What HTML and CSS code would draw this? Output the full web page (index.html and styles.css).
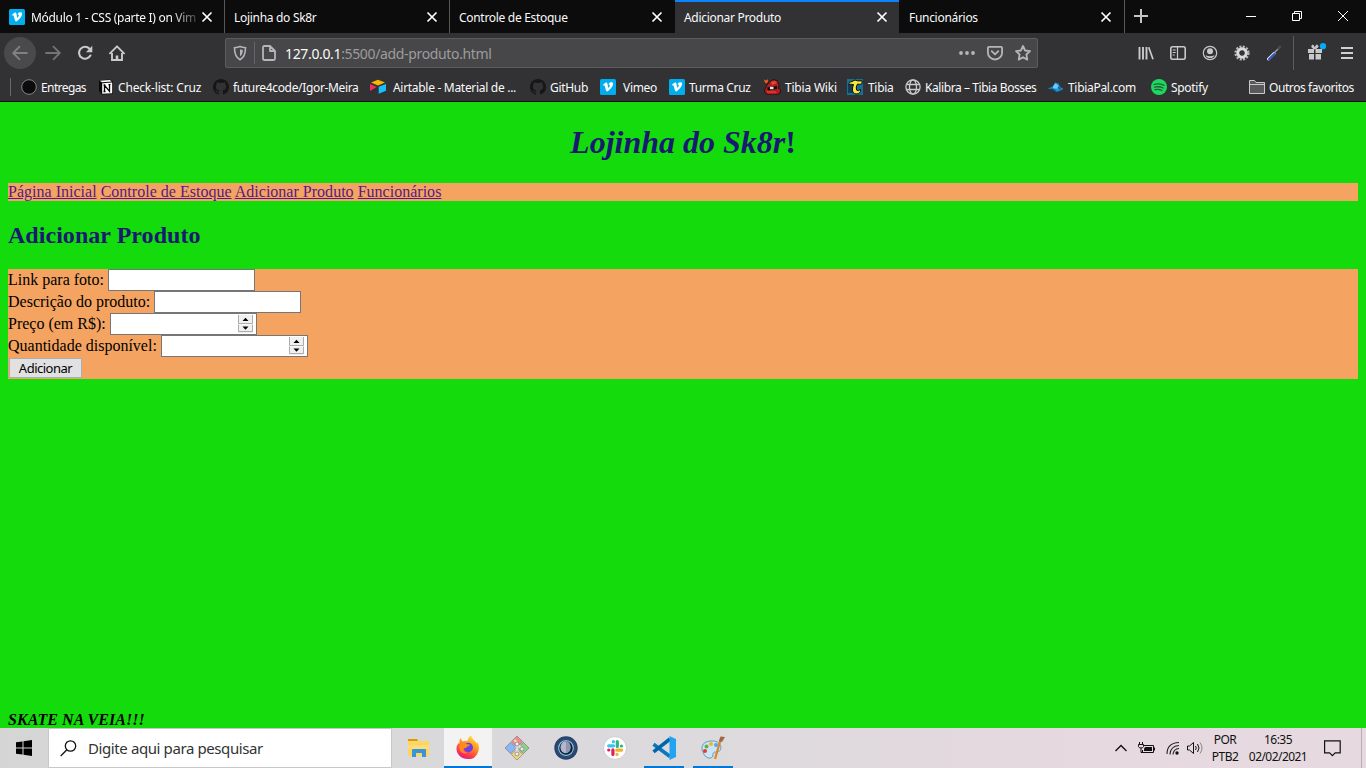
FILE: index.html
```html
<!DOCTYPE html>
<html lang="pt-BR">
<head>
<meta charset="utf-8">
<title>Adicionar Produto</title>
<link rel="stylesheet" href="styles.css">
</head>
<body>
<svg class="defs" width="0" height="0">
  <symbol id="close" viewBox="0 0 12 12"><path d="M1.5 1.5l9 9M10.5 1.5l-9 9" stroke="#fff" stroke-width="1.7" fill="none"/></symbol>
  <symbol id="vimeo" viewBox="0 0 16 16"><rect width="16" height="16" rx="1.5" fill="#00adef"/><path d="M2.8 5.9l.5.6c.8-.5 1.1-.4 1.4.5l1 3.6c.5 1.8 1.3 2.2 2.4 1.5 2.3-1.5 4.8-4.6 5-7C13.200 3.500 12.300 3 11 3.200 9.700 3.400 8.800 4.300 8.500 5.600c1.500-.5 1.700.5.8 2.100-.7 1.300-1 1.300-1.300.1L7.400 4.800C7.100 3.500 6.500 3.200 5.500 3.700 4.600 4.200 3.700 5.100 2.800 5.900z" fill="#fff"/></symbol>
  <symbol id="github" viewBox="0 0 16 16"><path fill="#161616" d="M8 0C3.580 0 0 3.580 0 8c0 3.540 2.290 6.530 5.470 7.590.4.070.55-.17.55-.38v-1.490c-2.230.48-2.700-1.070-2.700-1.070-.36-.92-.89-1.170-.89-1.170-.73-.5.050-.49.050-.49.810.060 1.230.83 1.230.83.72 1.230 1.880.87 2.340.66.070-.52.280-.87.510-1.070-1.780-.2-3.640-.89-3.640-3.950 0-.87.310-1.590.820-2.150-.080-.2-.360-1.020.080-2.120 0 0 .67-.21 2.200.82a7.600 7.600 0 0 1 4 0c1.530-1.040 2.200-.82 2.200-.82.440 1.100.160 1.920.080 2.120.510.560.820 1.270.820 2.150 0 3.070-1.870 3.750-3.650 3.950.290.250.540.730.540 1.480v2.200c0 .21.150.46.550.38A8 8 0 0 0 16 8c0-4.420-3.580-8-8-8z"/></symbol>
</svg>

<header class="browser">
  <div class="tabstrip">
    <div class="tab tab-icon"><svg class="favicon" width="16" height="16"><use href="#vimeo"/></svg><span class="tab-title fade">Módulo 1 - CSS (parte I) on Vim</span><svg class="close" width="12" height="12"><use href="#close"/></svg></div>
    <div class="tab"><span class="tab-title">Lojinha do Sk8r</span><svg class="close" width="12" height="12"><use href="#close"/></svg></div>
    <div class="tab before-active"><span class="tab-title">Controle de Estoque</span><svg class="close" width="12" height="12"><use href="#close"/></svg></div>
    <div class="tab active"><span class="tab-title">Adicionar Produto</span><svg class="close" width="12" height="12"><use href="#close"/></svg></div>
    <div class="tab last"><span class="tab-title">Funcionários</span><svg class="close" width="12" height="12"><use href="#close"/></svg></div>
    <svg class="newtab" width="14" height="14"><path d="M7 0v14M0 7h14" stroke="#c4c4c4" stroke-width="2"/></svg>
    <div class="winbtns">
      <svg width="10" height="10"><path d="M0 5.500h10" stroke="#fff"/></svg>
      <svg width="10" height="10" fill="none" stroke="#fff"><path d="M.5 2.500h7v7h-7zM2.500 2.500v-2h7v7h-2"/></svg>
      <svg width="10" height="10"><path d="M0 0l10 10M10 0L0 10" stroke="#fff"/></svg>
    </div>
  </div>

  <div class="toolbar">
    <div class="back"><svg width="16" height="16" fill="none" stroke="#818183" stroke-width="1.800" stroke-linecap="round" stroke-linejoin="round"><path d="M15 8H1.500M7.500 1.700L1.200 8l6.300 6.300"/></svg></div>
    <svg class="fwd" width="16" height="16" fill="none" stroke="#737375" stroke-width="1.800" stroke-linecap="round" stroke-linejoin="round"><path d="M1 8h13.500M8.500 1.700L14.800 8l-6.300 6.300"/></svg>
    <svg class="reload" width="16" height="16" fill="none" stroke="#c9c9ca" stroke-width="2.100"><path d="M12.500 3.700A6 6 0 1 0 13.400 10.500" stroke-linecap="round"/><path d="M15.300.8v6.400H8.900z" fill="#c9c9ca" stroke="none"/></svg>
    <svg class="home" width="16" height="16" fill="none" stroke="#c9c9ca" stroke-width="1.900"><path d="M1 8.300L8 1.300l7 7" stroke-linecap="round" stroke-linejoin="round"/><path d="M3 8v7h10V8"/><path d="M8 15v-4.500" stroke-width="2.600"/></svg>
    <div class="urlbar">
      <svg class="shield" width="14" height="16" fill="none" stroke="#b6b6b8" stroke-width="1.600"><path d="M7 1.500c2 .9 3.700 1.100 5.500 1.200 0 5.500-1 9.600-5.500 12C2.500 12.300 1.500 8.200 1.500 2.700 3.300 2.600 5 2.400 7 1.500z"/><path d="M7 4.200c1 .4 2 .7 2.900.8-.1 2.700-.8 5.100-2.900 6.600z" fill="#b6b6b8" stroke="none"/></svg>
      <i class="urlsep"></i>
      <svg class="doc" width="14" height="16" fill="none" stroke="#b6b6b8" stroke-width="1.800" stroke-linejoin="round"><path d="M2.500 1H8l5 5v7.500q0 1.500-1.500 1.500h-9Q1 15 1 13.500v-11Q1 1 2.500 1zM8 1v5h5"/></svg>
      <span class="url"><b>127.0.0.1</b>:5500/add-produto.html</span>
      <svg class="dots" width="16" height="16" fill="#b6b6b8"><circle cx="2" cy="8" r="1.900"/><circle cx="8" cy="8" r="1.900"/><circle cx="14" cy="8" r="1.900"/></svg>
      <svg class="pocket" width="16" height="16" fill="none" stroke="#b6b6b8" stroke-width="1.800" stroke-linecap="round" stroke-linejoin="round"><path d="M2 1.900h12q1.100 0 1.100 1.100v4.500a7.100 7 0 0 1-14.200 0V3Q.9 1.900 2 1.900z"/><path d="M4.700 6.200L8 9.300l3.300-3.100"/></svg>
      <svg class="star" width="16" height="16" fill="none" stroke="#b6b6b8" stroke-width="1.800" stroke-linejoin="round"><path d="M8 1l2.100 4.500 4.900.6-3.600 3.400.9 5.100L8 12.200l-4.300 2.400.9-5.100L1 6.100l4.900-.6z"/></svg>
    </div>
    <div class="tools">
      <svg width="16" height="16" fill="none" stroke="#c9c9ca" stroke-width="1.900"><path d="M1.500 2v12.500M5 2v12.500M8.500 2v12.500"/><path d="M10.700 2.300l4.300 12" stroke-width="1.700"/></svg>
      <svg width="16" height="16" fill="none" stroke="#c9c9ca" stroke-width="1.600"><rect x=".8" y="1.800" width="14.400" height="12.400" rx="1.700"/><path d="M7.500 2v12M2.700 5h3M2.700 7.500h3M2.700 10h2" stroke-width="1.200"/></svg>
      <svg width="16" height="16" fill="none" stroke="#c9c9ca" stroke-width="1.200"><circle cx="8" cy="8" r="6.700"/><circle cx="8" cy="6.200" r="3" fill="#c9c9ca" stroke="none"/><path d="M3.500 10.200q4.500 2 9 0Q11.500 13 8 13t-4.500-2.800z" fill="#c9c9ca" stroke="none"/></svg>
      <svg width="16" height="16" fill="none"><circle cx="8" cy="8" r="6.400" stroke="#b8b8b8" stroke-width="2.400" stroke-dasharray="2 1.350"/><circle cx="8" cy="8" r="4.200" stroke="#d9d9d9" stroke-width="3"/><circle cx="8" cy="8" r="2.300" fill="#343436"/></svg>
      <svg width="16" height="16" fill="none" stroke-linecap="round"><path d="M2.500 14L8 8.500" stroke="#e9edf5" stroke-width="3"/><path d="M3 14.300L8.300 9" stroke="#3058c0" stroke-width="2.200"/><path d="M8.500 7.500L12 4" stroke="#a5a5aa" stroke-width="1.300"/><path d="M12.500 3.300l1.500-1.500" stroke="#4a4a50" stroke-width="2.600"/></svg>
    </div>
    <i class="toolsep"></i>
    <svg class="gift" width="20" height="18" fill="#c9c9ca"><path d="M1 6h6v4H1zM8.500 6H15v4H8.500zM2 11h5v5.500H2zM8.500 11H14v5.500H8.500z"/><path d="M7.800 6Q3.500 4.500 5 2.600T7.800 6q1.300-5.500 2.900-3.600T7.800 6" stroke="#c9c9ca" stroke-width="1"/><circle cx="16" cy="3.200" r="3.100" fill="#00adff"/></svg>
    <svg class="menu" width="12" height="14"><path d="M0 2h12M0 7h12M0 12h12" stroke="#d0d0d1" stroke-width="2"/></svg>
  </div>

  <div class="bookmarks">
    <i class="bmsep"></i>
    <div class="bm b1"><svg width="16" height="16"><circle cx="8" cy="8" r="7.300" fill="#0b0b0b" stroke="#858587"/></svg><span>Entregas</span></div>
    <div class="bm b2"><svg width="16" height="16"><path d="M1 1.500L12 .5l3 2V15L4 15.500 1 12z" fill="#090909"/><path d="M1.800 1.800L11.800 1l2 1.500-9.800.7z" fill="#fff"/><path d="M4.200 4.200l10-.7v10.700l-10 .6z" fill="#fff"/><path d="M6.500 12.500V6.300l5 6V5.600M5.500 6.200h2M5.500 12.500h2M10.500 5.600h2" fill="none" stroke="#000" stroke-width="1.300"/></svg><span>Check-list: Cruz</span></div>
    <div class="bm b3"><svg width="16" height="16"><use href="#github"/></svg><span>future4code/Igor-Meira</span></div>
    <div class="bm b4 wide"><svg width="16" height="16"><path d="M1 3.500L8 .8l7 2.700-7 2.900z" fill="#fcb400"/><path d="M8.700 7.700L16 4.900v6.800l-7.300 3z" fill="#18bfff"/><path d="M0 5l6.700 2.900L0 12z" fill="#f82b60"/></svg><span>Airtable - Material de ...</span></div>
    <div class="bm b5"><svg width="16" height="16"><use href="#github"/></svg><span>GitHub</span></div>
    <div class="bm b6 wide"><svg width="16" height="16"><use href="#vimeo"/></svg><span>Vimeo</span></div>
    <div class="bm b7"><svg width="16" height="16"><use href="#vimeo"/></svg><span>Turma Cruz</span></div>
    <div class="bm b8"><svg width="17" height="16"><path d="M3 6l3-3.500L9 .5l4 1 2 4-.5 4 2.300 1.500-.8 3L13 15.700H4L.5 13 1 10z" fill="#b01e1e" stroke="#200808" stroke-width=".8"/><path d="M7 3l4-1 2 2-5 2z" fill="#e5443a"/><path d="M3 8.500l10-1.500v3l-9 1.500z" fill="#101010"/><path d="M6 7.800h3.500v2.400H6z" fill="#dfe6e8"/><path d="M3 13h9" stroke="#e0443b" stroke-width="1.300"/><path d="M0 .5l2 1 2-1.300L3.800 3 2 4.500.7 3z" fill="#ff5a16"/></svg><span>Tibia Wiki</span></div>
    <div class="bm b9"><svg width="17" height="16"><path d="M0 0h16v16H0z" fill="#147094"/><path d="M1 6h5v8H1z" fill="#143b57"/><path d="M1.500 5.500Q2 2.500 5 2.500L8 1q2 1.500 7 .8v3q-2 1-4.500.2Q8.500 8 9.500 11q1.700 2 4-.7v2.400Q12 15.300 9 15q-4-.8-3.500-5 0-2 1-4.500-2-.5-5 0z" fill="#fdea37" stroke="#0d0d08"/></svg><span>Tibia</span></div>
    <div class="bm b10"><svg width="16" height="16" fill="none" stroke="#c9c9ca" stroke-width="1.300"><circle cx="8" cy="8" r="7.100"/><ellipse cx="8" cy="8" rx="3.500" ry="7.100"/><path d="M1.500 5.500h13M1.500 10.500h13"/></svg><span>Kalibra – Tibia Bosses</span></div>
    <div class="bm b11"><svg width="16" height="16"><path d="M0 9.500l5-2 2-4 3.500 1L12 8l3.500 2-3 1.500-4 1.500-3.500-2z" fill="#1b91d8"/><path d="M5 7.300l2.500-3 3 2.500-1.500 3-4-.5z" fill="#6ccbf2"/><path d="M2 10l4 .5 2 2M10.500 8l2 2.500" stroke="#0b3f73" fill="none"/></svg><span>TibiaPal.com</span></div>
    <div class="bm b12"><svg width="16" height="16"><circle cx="8" cy="8" r="8" fill="#1ed760"/><path d="M3 5.500q5-1.500 10 .8M3.500 8.200q4.500-1.200 8.600.8M4 10.700q4-.8 7 .8" stroke="#25603b" stroke-width="1.300" stroke-linecap="round" fill="none"/></svg><span>Spotify</span></div>
    <div class="bm b13"><svg width="16" height="16" fill="#59595b" stroke="#c9c9ca"><path d="M.5 14.500v-13h5l1.500 2h8.500v11zM.5 5.500h15"/></svg><span>Outros favoritos</span></div>
  </div>
</header>

<main class="page">
  <h1><em>Lojinha do Sk8r</em>!</h1>
  <nav><a>Página Inicial</a> <a>Controle de Estoque</a> <a>Adicionar Produto</a> <a>Funcionários</a></nav>
  <h2>Adicionar Produto</h2>
  <form class="form">
    <div class="row"><label>Link para foto:</label><span class="field"></span></div>
    <div class="row"><label>Descrição do produto:</label><span class="field"></span></div>
    <div class="row"><label>Preço (em R$):</label><span class="field"><svg class="spin" width="15" height="18"><path d="M0 0h15v8.500H0zM0 9.500h15V18H0z" fill="#f0f0f0"/><path d="M.5 0v8.500h14V0M.5 9.500v7h14v-7" fill="none" stroke="#adadad"/><path d="M4.500 6h6l-3-3.200zM4.500 11.500h6l-3 3.200z"/></svg></span></div>
    <div class="row"><label>Quantidade disponível:</label><span class="field"><svg class="spin" width="15" height="18"><path d="M0 0h15v8.500H0zM0 9.500h15V18H0z" fill="#f0f0f0"/><path d="M.5 0v8.500h14V0M.5 9.500v7h14v-7" fill="none" stroke="#adadad"/><path d="M4.500 6h6l-3-3.200zM4.500 11.500h6l-3 3.200z"/></svg></span></div>
    <div class="row"><button type="button" class="submit">Adicionar</button></div>
  </form>
  <footer>SKATE NA VEIA!!!</footer>
</main>

<div class="taskbar">
  <div class="start"><svg width="16" height="16"><path d="M0 2.300L6.500 1.400v6.100H0zM7.500 1.200L16 0v7.500H7.500zM0 8.500h6.500v6.100L0 13.700zM7.500 8.500H16V16l-8.500-1.200z"/></svg></div>
  <div class="search"><svg width="17" height="17" fill="none" stroke="#111" stroke-width="1.300"><circle cx="10.500" cy="6" r="5.200"/><path d="M6.900 9.800L.7 16"/></svg><span>Digite aqui para pesquisar</span></div>
  <div class="apps">
    <div class="app"><svg width="24" height="24"><path d="M1 3h9l1 2H1z" fill="#d69b0d"/><path d="M1 5h21v15H1z" fill="#ffd45f"/><path d="M1 9h21v4H1z" fill="#ffdc78"/><path d="M5 14q0-1 1-1h12q1 0 1 1v7h-4v-4H9v4H5z" fill="#3595d7"/></svg></div>
    <div class="app current"><svg width="24" height="24"><defs><linearGradient id="fx" x1=".8" y1="0" x2=".3" y2="1"><stop stop-color="#fff044"/><stop offset=".4" stop-color="#ff9922"/><stop offset=".75" stop-color="#ff3d4a"/><stop offset="1" stop-color="#df168c"/></linearGradient></defs><path d="M4.500 3l2 3.500q2-1 5-.5Q12 2 15 .5q1 3 3 4.500 2 1.500 2.700 3.500l1-1.500Q24.500 14 21 19.500T11.500 24Q4 23.500 1.500 18T2.500 8l1 1q-.5-4 1-6z" fill="url(#fx)"/><circle cx="12.300" cy="12.500" r="4.700" fill="#6b3fe0"/><path d="M5 8.500q4-1.500 6 .7l3 .3q-.5 2-3 2.200-1 2-3.500 1.500Q7 17.500 12 18q-8 2-9-6z" fill="#ff8b20"/></svg></div>
    <div class="app"><svg width="26" height="26"><g transform="rotate(45 13 13)" stroke="#777" stroke-width=".6"><path d="M4.500 4.500h8v8h-8z" fill="#f68a83"/><path d="M13.500 4.500h8v8h-8z" fill="#8ed18c"/><path d="M4.500 13.500h8v8h-8z" fill="#8ab6f7"/><path d="M13.500 13.500h8v8h-8z" fill="#f3d879"/></g><path d="M10.500 5l2.500 3v11M13 9.500l5 4" fill="none" stroke="#ddd" stroke-width="2.500"/><g fill="#eee" stroke="#777" stroke-width=".7"><circle cx="13" cy="9" r="2"/><circle cx="18" cy="14" r="2"/><circle cx="13" cy="19" r="2"/></g></svg></div>
    <div class="app"><svg width="24" height="24" fill="none"><circle cx="12" cy="12" r="11.700" fill="#2a4270"/><circle cx="12" cy="12" r="9" fill="#101d36" stroke="#3d567f"/><circle cx="12" cy="12" r="7.400" stroke="#7cc0da" stroke-width="1.300"/><ellipse cx="11.500" cy="11.300" rx="5" ry="6" fill="#b3b6cd"/><path d="M12 5.300v12q4.500-1 4.500-6t-4.500-6" fill="#9195b2"/></svg></div>
    <div class="app"><svg width="24" height="24"><circle cx="12" cy="12" r="11.400" fill="#fff" stroke="#bbb" stroke-width=".6"/><g fill="none" stroke-width="3.200" stroke-linecap="round"><path d="M5.700 9.800h4.800M10.400 5.700v.1" stroke="#36c5f0"/><path d="M14.300 5.700v4.700M18.400 10h.1" stroke="#2eb67d"/><path d="M13.800 14.200h4.700M14 18.300v.1" stroke="#ecb22e"/><path d="M9.900 13.900v4.500M5.700 14h.1" stroke="#e01e5a"/></g></svg></div>
    <div class="app open"><svg width="24" height="24" fill="none"><path d="M1.500 8.200L18 20.500" stroke="#0879bd" stroke-width="3.600"/><path d="M1.500 15.800L18 3" stroke="#0065a9" stroke-width="3.600"/><path d="M17.500 0L24 3v18l-6.500 3z" fill="#23a4f2"/></svg></div>
    <div class="app open"><svg width="26" height="26"><path d="M2 15Q1 7 10 6t11 6q0 5-5 5-4 0-3 4-1 3-5 2T2 15z" fill="#cae5f3" stroke="#6e9cb8"/><circle cx="5" cy="16" r="2" fill="#e53c30"/><circle cx="6.500" cy="11.500" r="2" fill="#55b54b"/><circle cx="11" cy="9" r="2" fill="#f0b52f"/><circle cx="16" cy="10" r="2" fill="#5ba7de"/><path d="M15 24L20.500 5" stroke="#d88734" stroke-width="2.200"/><path d="M18.800 6l1.700-4.500 4.500.5-3 5z" fill="#9e6942"/></svg></div>
  </div>
  <div class="tray">
    <svg class="chev" width="12" height="8" fill="none" stroke="#111" stroke-width="1.300"><path d="M.5 7L6 1.500 11.500 7"/></svg>
    <svg class="bat" width="17" height="12" fill="none" stroke="#111"><path d="M5 3.500h10.500v7H4.500V8M16.500 5.500v3M1.500 0v2M4.500 0v2M.5 2.500h5v2Q5 6 3 6T.5 4.500zM3 6v4.500h2"/><path d="M7 5h7v4H6V7z" fill="#111" stroke="none"/></svg>
    <svg class="wifi" width="14" height="14" fill="none" stroke="#222" stroke-width="1.100"><path d="M1 13Q1 2 13 1.500M4 13.500Q4.500 5 13 4.500M7 13.500Q7.500 8 13 7.500"/><circle cx="11" cy="12" r="1.700" fill="#111" stroke="none"/></svg>
    <svg class="vol" width="17" height="14" fill="none" stroke="#111"><path d="M.5 5v4h2L6.500 12.500v-11L2.500 5zM8.500 5q1.500 2 0 4M10.500 3q3 4 0 8"/><path d="M13 1.500q4 5.500 0 11" stroke="#888"/></svg>
    <div class="lang"><span>POR</span><span>PTB2</span></div>
    <div class="clock"><span>16:35</span><span>02/02/2021</span></div>
    <svg class="note" width="17" height="17" fill="none" stroke="#111" stroke-width="1.200"><path d="M.6.800h15.600v12h-5L8.400 15.600 5.600 12.800h-5z"/></svg>
    <i class="desk"></i>
  </div>
</div>
</body>
</html>
```
FILE: styles.css
```css
* { box-sizing: border-box; }
body { margin: 0; width: 1366px; height: 768px; overflow: hidden; display: flex; flex-direction: column; font-family: "Liberation Serif", serif; font-size: 16px; }
svg { display: block; flex: none; }
.defs { position: absolute; }
i { display: block; flex: none; }

.browser { height: 102px; flex: none; background: #323234; border-bottom: 1px solid #0c0c0d; color: #f9f9fa; font: 12px "Noto Sans", sans-serif; letter-spacing: -0.3px; }
.tabstrip { height: 33px; display: flex; background: #0c0c0d; }
.tab { width: 225px; height: 33px; border-right: 1px solid #58585a; display: flex; align-items: center; padding: 2px 11px 0 9px; }
.tab.before-active { border-right-color: #0c0c0d; }
.tab.active { background: #323234; border-top: 2px solid #0a84ff; border-right: 0; padding-top: 0; width: 224px; padding-right: 11px; }
.tab.last { width: 226px; padding-left: 10px; padding-right: 12px; }
.tab-title { flex: 1; white-space: nowrap; line-height: 18px; }
.tab-title.fade { flex: none; width: 166px; mask-image: linear-gradient(to right, #000 140px, transparent 172px); margin-left: 6px; }
.tab .favicon { margin-top: -1px; }
.tab .close { margin-top: -2px; }
.tab-icon .close { margin-left: 4px; }
.newtab { margin: 9px 0 0 9px; }
.winbtns { display: flex; gap: 36px; margin: 11px 0 0 auto; padding-right: 18px; }

.toolbar { height: 40px; display: flex; align-items: center; }
.back { width: 32px; height: 32px; border-radius: 50%; background: #4a4a4c; margin-left: 4px; display: flex; align-items: center; justify-content: center; }
.fwd { margin-left: 9px; }
.reload { margin-left: 16px; }
.home { margin-left: 16px; }
.urlbar { width: 813px; height: 30px; margin-left: 100px; background: #474749; border: 1px solid #5c5c5e; border-radius: 2px; display: flex; align-items: center; }
.shield { margin-left: 7px; }
.urlsep { width: 1px; height: 22px; background: #66666e; margin-left: 7px; }
.doc { margin-left: 7px; }
.url { flex: 1; margin-left: 9px; font-size: 14px; letter-spacing: -0.35px; color: #9c9c9d; }
.url b { font-weight: 400; color: #f9f9fa; }
.pocket { margin-left: 12px; }
.star { margin: 0 6px 0 12px; }
.tools { display: flex; gap: 16px; margin-left: 100px; }
.toolsep { width: 1px; height: 34px; background: #5d5d5f; margin-left: 11px; }
.gift { margin: -3px 0 0 13px; }
.menu { margin-left: 14px; }

.bookmarks { height: 28px; display: flex; align-items: center; }
.bmsep { width: 1px; height: 18px; background: #68686a; margin: 0 10px; }
.bm { display: flex; align-items: center; gap: 4px; white-space: nowrap; flex: none; }
.bm.wide { gap: 7px; }
.b1 { width: 77px; letter-spacing: -0.6px; }
.b2 { width: 115px; letter-spacing: -0.18px; }
.b3 { width: 157px; letter-spacing: -0.34px; }
.b4 { width: 160px; }
.b5 { width: 70px; }
.b6 { width: 69px; }
.b7 { width: 95px; letter-spacing: -0.36px; }
.b8 { width: 83px; letter-spacing: -0.2px; }
.b9 { width: 58px; }
.b10 { width: 143px; letter-spacing: -0.42px; }
.b11 { width: 103px; }
.b12 { width: 98px; }
.b13 { letter-spacing: -0.42px; }

.page { height: 626px; flex: none; background: #14dc0c; padding: 0 8px; display: flex; flex-direction: column; overflow: hidden; color: #000; }
h1 { margin: 22px 0 0; height: 37px; line-height: 37px; font-size: 32px; text-align: center; color: #191970; }
nav { margin-top: 22px; height: 18px; line-height: 18px; background: #f4a460; letter-spacing: 0.015px; }
nav a { color: #551a8b; text-decoration: underline; }
h2 { margin: 20px 0 0; height: 28px; line-height: 28px; font-size: 24px; color: #191970; letter-spacing: 0.04px; }
.form { margin: 20px 0 0; height: 110px; background: #f4a460; }
.row { height: 22px; display: flex; gap: 4px; line-height: 22px; }
.field { width: 147px; height: 22px; border: 1px solid #767678; background: #fff; display: flex; justify-content: flex-end; align-items: center; padding-right: 3px; }
.submit { margin: 1px 0 0 1px; width: 73px; height: 20px; padding: 0; border: 1px solid #adadad; background: #e1e1e1; color: #000; font: 13px "Noto Sans", sans-serif; letter-spacing: -0.5px; line-height: 16px; }
footer { margin: auto 0 -1px; height: 18px; line-height: 18px; font-weight: bold; font-style: italic; letter-spacing: 0.05px; }

.taskbar { height: 40px; flex: none; display: flex; background: linear-gradient(to right, #d5d5d6, #dcdadc 50%, #e6d9df 80%, #e6dae0); font-family: "Noto Sans", sans-serif; color: #111; }
.start { width: 48px; display: flex; align-items: center; justify-content: center; }
.search { width: 344px; height: 40px; background: #fff; border: 1px solid #c8c8c8; display: flex; align-items: center; padding-left: 11px; gap: 11px; font-size: 15px; letter-spacing: -0.4px; color: #333; }
.apps { display: flex; margin-left: 3px; gap: 1px; }
.app { width: 48px; height: 40px; display: flex; align-items: center; justify-content: center; }
.app.current { background: #f3f3f3; border-bottom: 2px solid #0078d7; }
.app.open { background: linear-gradient(#0078d7, #0078d7) center bottom / 40px 2px no-repeat; }
.tray { margin-left: auto; display: flex; align-items: center; font-size: 12px; letter-spacing: -0.55px; }
.bat { margin-left: 10px; }
.wifi { margin-left: 11px; }
.vol { margin-left: 7px; }
.lang, .clock { display: flex; flex-direction: column; align-items: center; line-height: 17px; }
.lang { width: 28px; margin-left: 7px; }
.clock { width: 60px; margin-left: 9px; }
.note { margin-left: 16px; }
.desk { width: 1px; height: 40px; background: #b9b0b5; margin: 0 4px 0 20px; }
.chev { margin-right: 1px; }
```
